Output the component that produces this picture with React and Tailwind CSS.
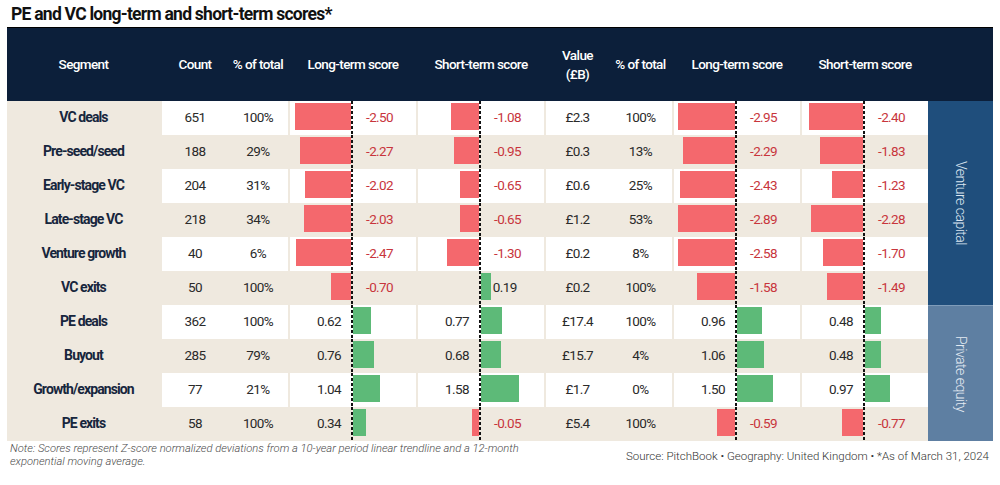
import React from "react";

const rows = [
  ["VC deals", "651", "100%", -2.5, -1.08, "£2.3", "100%", -2.95, -2.4],
  ["Pre-seed/seed", "188", "29%", -2.27, -0.95, "£0.3", "13%", -2.29, -1.83],
  ["Early-stage VC", "204", "31%", -2.02, -0.65, "£0.6", "25%", -2.43, -1.23],
  ["Late-stage VC", "218", "34%", -2.03, -0.65, "£1.2", "53%", -2.89, -2.28],
  ["Venture growth", "40", "6%", -2.47, -1.3, "£0.2", "8%", -2.58, -1.7],
  ["VC exits", "50", "100%", -0.7, 0.19, "£0.2", "100%", -1.58, -1.49],
  ["PE deals", "362", "100%", 0.62, 0.77, "£17.4", "100%", 0.96, 0.48],
  ["Buyout", "285", "79%", 0.76, 0.68, "£15.7", "4%", 1.06, 0.48],
  ["Growth/expansion", "77", "21%", 1.04, 1.58, "£1.7", "0%", 1.5, 0.97],
  ["PE exits", "58", "100%", 0.34, -0.05, "£5.4", "100%", -0.59, -0.77],
];

const SANS = "font-['Roboto',sans-serif]";
const NUM = "text-[13.5px] font-normal tracking-[-0.6px]";

function fmt(v) {
  return v.toFixed(2);
}

function Dash() {
  return (
    <div className="w-[2px] shrink-0 bg-[repeating-linear-gradient(to_bottom,#111_0px,#111_3px,transparent_3px,transparent_5px)]" />
  );
}

function Score({ v, white, after }) {
  const neg = v < 0;
  const w = Math.min(57, 6 + 20 * Math.abs(v));
  return (
    <div className={`flex w-[126px] shrink-0 ${white ? "bg-white" : ""}`}>
      <div className="flex w-[61px] shrink-0 items-start justify-end pt-[2px]">
        {neg ? (
          <div className="h-[27px] bg-[#f4686d]" style={{ width: w }} />
        ) : after ? null : (
          <span className={`self-center pr-[10px] pb-[3px] text-[#2a2a2a] ${NUM}`}>{fmt(v)}</span>
        )}
      </div>
      <Dash />
      <div className="flex flex-1 items-start pt-[2px]">
        {neg ? (
          <span className={`self-center pl-[13px] pb-[3px] text-[#c8353c] ${NUM}`}>{fmt(v)}</span>
        ) : (
          <>
            <div className="h-[27px] bg-[#5dba78]" style={{ width: w }} />
            {after ? (
              <span className={`self-center pl-[2px] pb-[3px] text-[#2a2a2a] ${NUM}`}>{fmt(v)}</span>
            ) : null}
          </>
        )}
      </div>
    </div>
  );
}

function Row({ r, i }) {
  const white = i % 2 === 0;
  const bg = white ? "bg-white" : "";
  return (
    <div className={`flex h-[34px] gap-[2px] ${SANS}`}>
      <div className="flex w-[153px] shrink-0 items-center justify-center pb-[2px] text-[14px] font-bold tracking-[-0.9px] text-[#17263d]">
        {r[0]}
      </div>
      <div className={`flex w-[126px] shrink-0 items-center pb-[2px] text-[#2a2a2a] ${NUM} ${bg}`}>
        <div className="w-[66px] text-center">{r[1]}</div>
        <div className="w-[60px] text-center">{r[2]}</div>
      </div>
      <Score v={r[3]} white={white} />
      <Score v={r[4]} white={white} after={i === 5} />
      <div className={`flex w-[126px] shrink-0 items-center pb-[2px] text-[#2a2a2a] ${NUM} ${bg}`}>
        <div className="w-[63px] text-center">{r[5]}</div>
        <div className="w-[63px] text-center">{r[6]}</div>
      </div>
      <Score v={r[7]} white={white} />
      <Score v={r[8]} white={white} />
    </div>
  );
}

export default function App() {
  return (
    <div className="h-[485px] w-[1000px] overflow-hidden bg-white">
      <div
        className={`h-[27px] pl-[11px] pt-[2px] text-[17.5px] leading-[25px] font-bold tracking-[-0.75px] text-[#111] ${SANS}`}
      >
        PE and VC long-term and short-term scores*
      </div>
      <div className="ml-[7px] w-[986px]">
        <div
          className={`flex h-[74px] items-center gap-[2px] border-t border-black bg-[#0c1f3a] text-[13.5px] font-medium tracking-[-0.6px] whitespace-nowrap text-white ${SANS}`}
        >
          <div className="w-[153px] shrink-0 text-center">Segment</div>
          <div className="flex w-[126px] shrink-0">
            <div className="w-[66px] text-center">Count</div>
            <div className="w-[60px] text-center">% of total</div>
          </div>
          <div className="w-[126px] shrink-0 text-center">Long-term score</div>
          <div className="w-[126px] shrink-0 text-center">Short-term score</div>
          <div className="flex w-[126px] shrink-0 items-center">
            <div className="w-[63px] text-center leading-[19px]">
              Value
              <br />
              (£B)
            </div>
            <div className="w-[63px] text-center">% of total</div>
          </div>
          <div className="w-[126px] shrink-0 text-center">Long-term score</div>
          <div className="w-[126px] shrink-0 text-center">Short-term score</div>
        </div>
        <div className="flex bg-[#efe9df]">
          <div className="flex w-[921px] flex-col">
            {rows.map((r, i) => (
              <Row key={r[0]} r={r} i={i} />
            ))}
          </div>
          <div className={`flex w-[65px] flex-col ${SANS}`}>
            <div className="flex h-[204px] items-center justify-center bg-[#1f4e7c]">
              <span className="text-[14px] font-light tracking-[-0.5px] text-[#dce6f1] [writing-mode:vertical-rl]">
                Venture capital
              </span>
            </div>
            <div className="h-px bg-[#7f9cba]" />
            <div className="flex h-[135px] items-center justify-center bg-[#5e7fa2]">
              <span className="text-[14px] font-light tracking-[-0.5px] text-[#e3eaf2] [writing-mode:vertical-rl]">
                Private equity
              </span>
            </div>
          </div>
        </div>
      </div>
      <div className="flex items-start justify-between pl-[10px] pr-[11px] pt-[1px]">
        <div className={`text-[11.2px] leading-[13px] italic font-light text-[#4a4a4a] ${SANS}`}>
          <div className="whitespace-nowrap">
            Note: Scores represent Z-score normalized deviations from a 10-year period linear trendline and a 12-month
          </div>
          <div className="whitespace-nowrap">exponential moving average.</div>
        </div>
        <div className={`whitespace-nowrap pt-[6px] text-[11.5px] font-light text-[#333] ${SANS}`}>
          Source: PitchBook • Geography: United Kingdom • *As of March 31, 2024
        </div>
      </div>
    </div>
  );
}
